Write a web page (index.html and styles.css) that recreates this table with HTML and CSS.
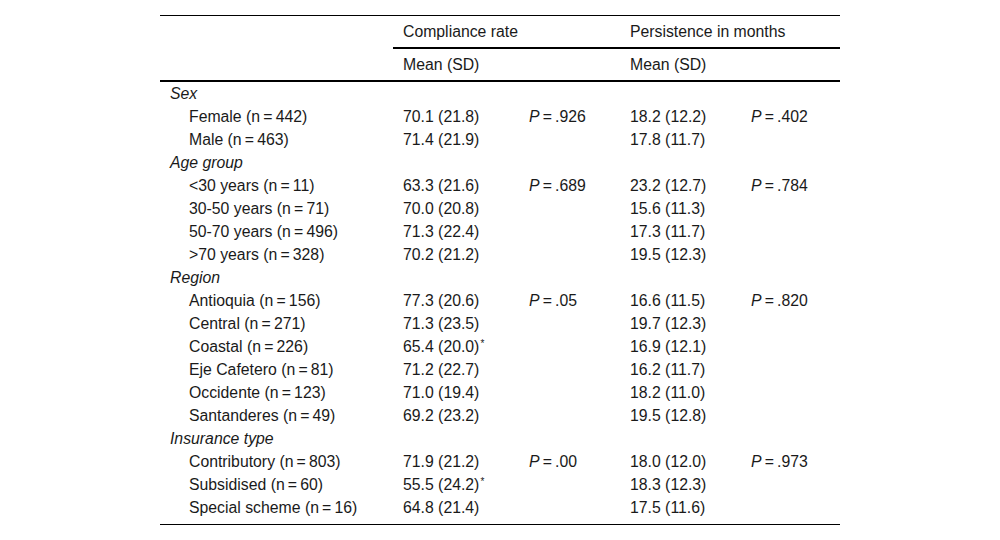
FILE: index.html
```html
<!DOCTYPE html>
<html lang="en">
<head>
<meta charset="utf-8">
<title>Compliance and persistence</title>
<link rel="stylesheet" href="styles.css">
</head>
<body>
<table class="stats">
  <colgroup>
    <col class="c-label">
    <col class="c-mean1">
    <col class="c-p1">
    <col class="c-mean2">
    <col class="c-p2">
  </colgroup>
  <thead>
    <tr class="head-top">
      <th></th>
      <th colspan="2" class="grp">Compliance rate</th>
      <th colspan="2" class="grp">Persistence in months</th>
    </tr>
    <tr class="head-sub">
      <th></th>
      <th colspan="2">Mean (SD)</th>
      <th colspan="2">Mean (SD)</th>
    </tr>
  </thead>
  <tbody>
    <tr class="cat"><td colspan="5">Sex</td></tr>
    <tr><td class="lbl">Female (n&#8201;=&#8201;442)</td><td>70.1 (21.8)</td><td><i>P</i>&#8201;=&#8201;.926</td><td>18.2 (12.2)</td><td><i>P</i>&#8201;=&#8201;.402</td></tr>
    <tr><td class="lbl">Male (n&#8201;=&#8201;463)</td><td>71.4 (21.9)</td><td></td><td>17.8 (11.7)</td><td></td></tr>
    <tr class="cat"><td colspan="5">Age group</td></tr>
    <tr><td class="lbl">&lt;30 years (n&#8201;=&#8201;11)</td><td>63.3 (21.6)</td><td><i>P</i>&#8201;=&#8201;.689</td><td>23.2 (12.7)</td><td><i>P</i>&#8201;=&#8201;.784</td></tr>
    <tr><td class="lbl">30-50 years (n&#8201;=&#8201;71)</td><td>70.0 (20.8)</td><td></td><td>15.6 (11.3)</td><td></td></tr>
    <tr><td class="lbl">50-70 years (n&#8201;=&#8201;496)</td><td>71.3 (22.4)</td><td></td><td>17.3 (11.7)</td><td></td></tr>
    <tr><td class="lbl">&gt;70 years (n&#8201;=&#8201;328)</td><td>70.2 (21.2)</td><td></td><td>19.5 (12.3)</td><td></td></tr>
    <tr class="cat"><td colspan="5">Region</td></tr>
    <tr><td class="lbl">Antioquia (n&#8201;=&#8201;156)</td><td>77.3 (20.6)</td><td><i>P</i>&#8201;=&#8201;.05</td><td>16.6 (11.5)</td><td><i>P</i>&#8201;=&#8201;.820</td></tr>
    <tr><td class="lbl">Central (n&#8201;=&#8201;271)</td><td>71.3 (23.5)</td><td></td><td>19.7 (12.3)</td><td></td></tr>
    <tr><td class="lbl">Coastal (n&#8201;=&#8201;226)</td><td>65.4 (20.0)<sup class="sig">*</sup></td><td></td><td>16.9 (12.1)</td><td></td></tr>
    <tr><td class="lbl">Eje Cafetero (n&#8201;=&#8201;81)</td><td>71.2 (22.7)</td><td></td><td>16.2 (11.7)</td><td></td></tr>
    <tr><td class="lbl">Occidente (n&#8201;=&#8201;123)</td><td>71.0 (19.4)</td><td></td><td>18.2 (11.0)</td><td></td></tr>
    <tr><td class="lbl">Santanderes (n&#8201;=&#8201;49)</td><td>69.2 (23.2)</td><td></td><td>19.5 (12.8)</td><td></td></tr>
    <tr class="cat"><td colspan="5">Insurance type</td></tr>
    <tr><td class="lbl">Contributory (n&#8201;=&#8201;803)</td><td>71.9 (21.2)</td><td><i>P</i>&#8201;=&#8201;.00</td><td>18.0 (12.0)</td><td><i>P</i>&#8201;=&#8201;.973</td></tr>
    <tr><td class="lbl">Subsidised (n&#8201;=&#8201;60)</td><td>55.5 (24.2)<sup class="sig">*</sup></td><td></td><td>18.3 (12.3)</td><td></td></tr>
    <tr class="last"><td class="lbl">Special scheme (n&#8201;=&#8201;16)</td><td>64.8 (21.4)</td><td></td><td>17.5 (11.6)</td><td></td></tr>
  </tbody>
</table>
</body>
</html>
```

FILE: styles.css
```css
html, body {
  margin: 0;
  padding: 0;
  background: #ffffff;
}

body {
  font-family: "Liberation Sans", Arial, sans-serif;
  font-size: 15.8px;
  color: #1a1a1a;
}

.stats {
  width: 680px;
  margin: 15px auto 0;
  border-collapse: collapse;
  table-layout: fixed;
  border-top: 1px solid #000;
  border-bottom: 1px solid #000;
}

.c-label { width: 233px; }
.c-mean1 { width: 126px; }
.c-p1 { width: 101px; }
.c-mean2 { width: 121px; }
.c-p2 { width: 99px; }

.stats th {
  font-weight: normal;
  text-align: left;
  padding: 0 10px;
  height: 31px;
  line-height: 31px;
  vertical-align: middle;
}

.head-top th.grp {
  border-bottom: 2px solid #000;
}

.head-sub th {
  border-bottom: 2px solid #000;
}

.stats td {
  padding: 0 10px;
  height: 23px;
  line-height: 23px;
  vertical-align: middle;
  white-space: nowrap;
}

.stats tr.cat td {
  font-style: italic;
}

.stats td.lbl {
  padding-left: 29px;
}

.stats tr.last td {
  height: 28px;
  vertical-align: top;
}

.sig {
  font-size: 10px;
  line-height: 0;
  vertical-align: 5px;
  margin-left: 1px;
}
```
